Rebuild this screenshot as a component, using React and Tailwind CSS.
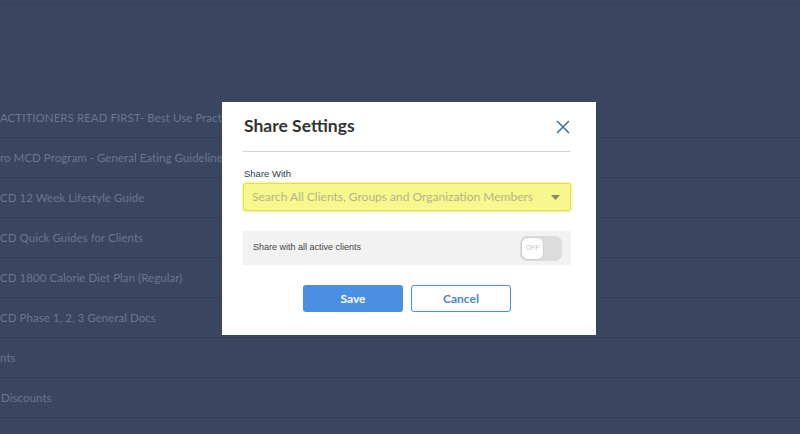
import React from "react";

const rows = [
  "ACTITIONERS READ FIRST- Best Use Practices",
  "ro MCD Program - General Eating Guidelines",
  "CD 12 Week Lifestyle Guide",
  "CD Quick Guides for Clients",
  "CD 1800 Calorie Diet Plan (Regular)",
  "CD Phase 1, 2, 3 General Docs",
  "nts",
  "Discounts",
  "",
];

export default function App() {
  return (
    <div className="relative w-[800px] h-[434px] overflow-hidden bg-[#3a4560]" style={{ fontFamily: "Lato, 'Open Sans', sans-serif" }}>
      <div className="h-[98px]">
        <div className="h-[5px] border-b border-[#343e57]" />
      </div>
      <div className="flex flex-col">
        {rows.map((r, i) => (
          <div key={i} className={"h-[40px] flex items-center border-b border-[#333d55] text-[11.5px] tracking-[0.05px] text-[#6c768c] whitespace-pre " + (i === 7 ? "pl-[1px]" : "")}>
            {r}
          </div>
        ))}
      </div>

      <div className="absolute left-[222px] top-[102px] w-[374px] h-[233px] bg-white flex flex-col">
        <div className="flex flex-col pl-[21px] pr-[25px]">
          <div className="h-[50px] flex items-center justify-between pl-[1px] border-b border-[#d3d3d3] mr-[1px]">
            <span className="text-[17.5px] font-bold text-[#333333]">Share Settings</span>
            <svg width="14" height="14" viewBox="0 0 14 14">
              <path d="M1 1 L13 13 M13 1 L1 13" stroke="#3d72a8" strokeWidth="1.6" fill="none" />
            </svg>
          </div>
          <div className="h-[31px] flex items-end pb-[2px] pl-[1px] text-[9.5px] text-[#2f3a4f]" style={{ fontFamily: "'Liberation Sans', Arial, sans-serif" }}>
            Share With
          </div>
          <div className="h-[28px] flex items-center justify-between bg-[#f7f78e] border border-[#dede5a] rounded-[3px] pl-[8px] pr-[10px] shadow-[0_0_2px_1px_#f4f48a]">
            <span className="text-[12px] text-[#b5b585]">Search All Clients, Groups and Organization Members</span>
            <svg width="9" height="5" viewBox="0 0 9 5"><path d="M0 0 L9 0 L4.5 5 Z" fill="#8a8a60" /></svg>
          </div>
          <div className="mt-[20px] h-[34px] flex items-center justify-between bg-[#f2f2f2] pl-[10px] pr-[9px]">
            <span className="text-[9px] text-[#444]" style={{ fontFamily: "'Liberation Sans', Arial, sans-serif" }}>Share with all active clients</span>
            <div className="w-[42px] h-[25px] rounded-[7px] bg-[#dcdcdc] flex items-center pl-[1px]">
              <div className="w-[23px] h-[23px] rounded-[7px] bg-white border border-[#cfcfcf] flex items-center justify-center text-[7px] text-[#c8c8c8]" style={{ fontFamily: "'Liberation Sans', Arial, sans-serif" }}>
                OFF
              </div>
            </div>
          </div>
          <div className="mt-[20px] flex justify-center gap-[8px]">
            <button className="w-[100px] h-[27px] rounded-[3px] bg-[#4a90e2] text-white text-[12px] font-bold">Save</button>
            <button className="w-[100px] h-[27px] rounded-[3px] bg-white border border-[#4a90e2] text-[#4a86c8] text-[12px] font-bold">Cancel</button>
          </div>
        </div>
      </div>
    </div>
  );
}
